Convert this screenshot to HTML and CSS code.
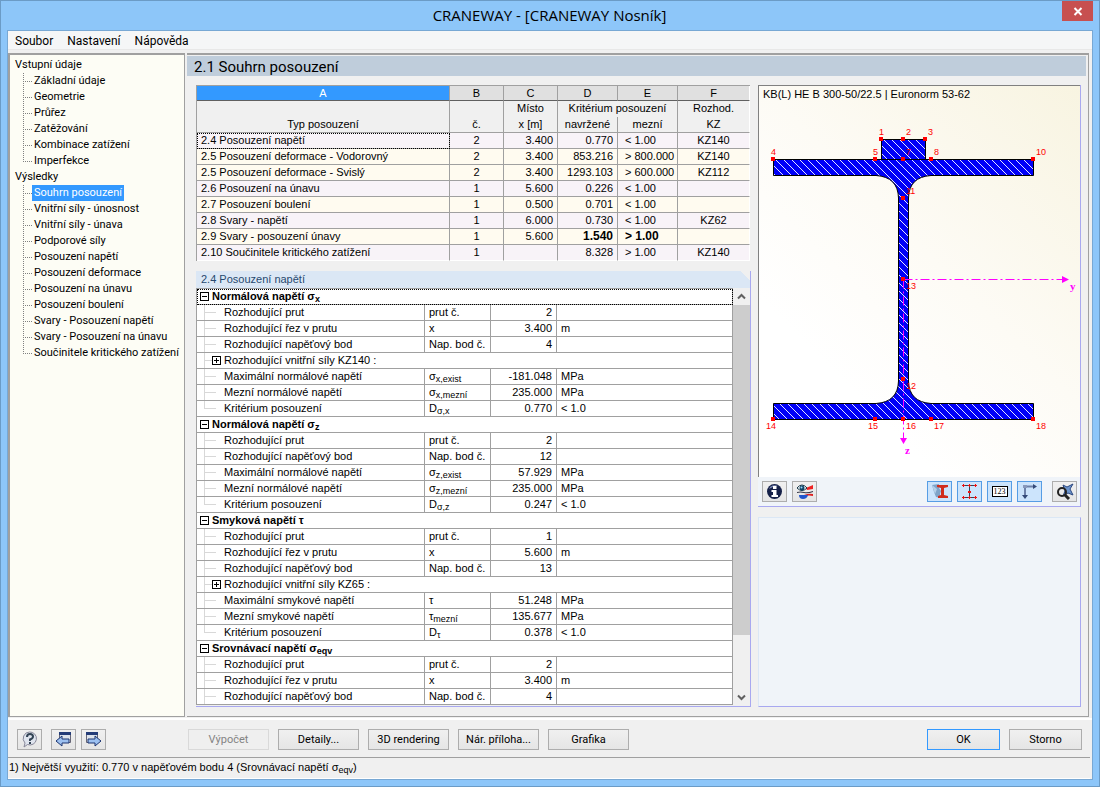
FILE: index.html
```html
<!DOCTYPE html>
<html lang="cs">
<head>
<meta charset="UTF-8">
<meta name="viewport" content="width=device-width, initial-scale=1.0">
<title>CRANEWAY - [CRANEWAY Nosník]</title>
<link rel="stylesheet" href="styles.css">
</head>
<body>
<div class="window">
  <header class="titlebar">
    <h1>CRANEWAY - [CRANEWAY Nosník]</h1>
    <button class="close" aria-label="Zavřít">
      <svg width="10" height="9" viewBox="0 0 10 9"><path d="M1.5 1l7 7M8.5 1l-7 7" stroke="#fff" stroke-width="2"/></svg>
    </button>
  </header>

  <div class="client">
    <nav class="menu">
      <button>Soubor</button>
      <button>Nastavení</button>
      <button>Nápověda</button>
    </nav>

    <div class="body">
      <nav class="tree">
        <p>Vstupní údaje</p>
        <ul>
          <li><a href="#">Základní údaje</a></li>
          <li><a href="#">Geometrie</a></li>
          <li><a href="#">Průřez</a></li>
          <li><a href="#">Zatěžování</a></li>
          <li><a href="#">Kombinace zatížení</a></li>
          <li><a href="#">Imperfekce</a></li>
        </ul>
        <p>Výsledky</p>
        <ul>
          <li><a href="#" class="selected">Souhrn posouzení</a></li>
          <li><a href="#">Vnitřní síly - únosnost</a></li>
          <li><a href="#">Vnitřní síly - únava</a></li>
          <li><a href="#">Podporové síly</a></li>
          <li><a href="#">Posouzení napětí</a></li>
          <li><a href="#">Posouzení deformace</a></li>
          <li><a href="#">Posouzení na únavu</a></li>
          <li><a href="#">Posouzení boulení</a></li>
          <li><a href="#">Svary - Posouzení napětí</a></li>
          <li><a href="#">Svary - Posouzení na únavu</a></li>
          <li><a href="#">Součinitele kritického zatížení</a></li>
        </ul>
      </nav>

      <main class="main">
        <h2>2.1 Souhrn posouzení</h2>
        <div class="columns">
          <div class="left">
            <table class="summary">
              <colgroup>
                <col><col class="c-no"><col class="c-no"><col class="c-val"><col class="c-val"><col class="c-kz">
              </colgroup>
              <thead>
                <tr class="letters"><th class="active">A</th><th>B</th><th>C</th><th>D</th><th>E</th><th>F</th></tr>
                <tr class="names"><th></th><th></th><th>Místo</th><th colspan="2">Kritérium posouzení</th><th>Rozhod.</th></tr>
                <tr class="names last"><th>Typ posouzení</th><th>č.</th><th>x [m]</th><th>navržené</th><th>mezní</th><th>KZ</th></tr>
              </thead>
              <tbody>
                <tr><td class="focus">2.4 Posouzení napětí</td><td>2</td><td>3.400</td><td>0.770</td><td>&lt; 1.00</td><td>KZ140</td></tr>
                <tr class="warm"><td>2.5 Posouzení deformace - Vodorovný</td><td>2</td><td>3.400</td><td>853.216</td><td>&gt; 800.000</td><td>KZ140</td></tr>
                <tr class="warm"><td>2.5 Posouzení deformace - Svislý</td><td>2</td><td>3.400</td><td>1293.103</td><td>&gt; 600.000</td><td>KZ112</td></tr>
                <tr><td>2.6 Posouzení na únavu</td><td>1</td><td>5.600</td><td>0.226</td><td>&lt; 1.00</td><td></td></tr>
                <tr class="warm"><td>2.7 Posouzení boulení</td><td>1</td><td>0.500</td><td>0.701</td><td>&lt; 1.00</td><td></td></tr>
                <tr><td>2.8 Svary - napětí</td><td>1</td><td>6.000</td><td>0.730</td><td>&lt; 1.00</td><td>KZ62</td></tr>
                <tr class="warm"><td>2.9 Svary - posouzení únavy</td><td>1</td><td>5.600</td><td class="over">1.540</td><td class="over">&gt; 1.00</td><td></td></tr>
                <tr><td>2.10 Součinitele kritického zatížení</td><td>1</td><td></td><td>8.328</td><td>&gt; 1.00</td><td>KZ140</td></tr>
              </tbody>
            </table>

            <section class="details">
              <h3>2.4 Posouzení napětí</h3>
              <div class="scroller">
                <table class="grid">
                  <colgroup><col class="g-name"><col class="g-sym"><col class="g-val"><col></colgroup>
                  <tbody>
                    <tr class="group focus"><th colspan="4"><i class="box"></i>Normálová napětí σ<sub>x</sub></th></tr>
                    <tr><td>Rozhodující prut</td><td>prut č.</td><td>2</td><td></td></tr>
                    <tr><td>Rozhodující řez v prutu</td><td>x</td><td>3.400</td><td>m</td></tr>
                    <tr><td>Rozhodující napěťový bod</td><td>Nap. bod č.</td><td>4</td><td></td></tr>
                    <tr class="sub"><td colspan="4"><i class="box plus"></i>Rozhodující vnitřní síly KZ140 :</td></tr>
                    <tr><td>Maximální normálové napětí</td><td>σ<sub>x,exist</sub></td><td>-181.048</td><td>MPa</td></tr>
                    <tr><td>Mezní normálové napětí</td><td>σ<sub>x,mezní</sub></td><td>235.000</td><td>MPa</td></tr>
                    <tr class="end"><td>Kritérium posouzení</td><td>D<sub>σ,x</sub></td><td>0.770</td><td>&lt; 1.0</td></tr>

                    <tr class="group"><th colspan="4"><i class="box"></i>Normálová napětí σ<sub>z</sub></th></tr>
                    <tr><td>Rozhodující prut</td><td>prut č.</td><td>2</td><td></td></tr>
                    <tr><td>Rozhodující napěťový bod</td><td>Nap. bod č.</td><td>12</td><td></td></tr>
                    <tr><td>Maximální normálové napětí</td><td>σ<sub>z,exist</sub></td><td>57.929</td><td>MPa</td></tr>
                    <tr><td>Mezní normálové napětí</td><td>σ<sub>z,mezní</sub></td><td>235.000</td><td>MPa</td></tr>
                    <tr class="end"><td>Kritérium posouzení</td><td>D<sub>σ,z</sub></td><td>0.247</td><td>&lt; 1.0</td></tr>

                    <tr class="group"><th colspan="4"><i class="box"></i>Smyková napětí τ</th></tr>
                    <tr><td>Rozhodující prut</td><td>prut č.</td><td>1</td><td></td></tr>
                    <tr><td>Rozhodující řez v prutu</td><td>x</td><td>5.600</td><td>m</td></tr>
                    <tr><td>Rozhodující napěťový bod</td><td>Nap. bod č.</td><td>13</td><td></td></tr>
                    <tr class="sub"><td colspan="4"><i class="box plus"></i>Rozhodující vnitřní síly KZ65 :</td></tr>
                    <tr><td>Maximální smykové napětí</td><td>τ</td><td>51.248</td><td>MPa</td></tr>
                    <tr><td>Mezní smykové napětí</td><td>τ<sub>mezní</sub></td><td>135.677</td><td>MPa</td></tr>
                    <tr class="end"><td>Kritérium posouzení</td><td>D<sub>τ</sub></td><td>0.378</td><td>&lt; 1.0</td></tr>

                    <tr class="group"><th colspan="4"><i class="box"></i>Srovnávací napětí σ<sub>eqv</sub></th></tr>
                    <tr><td>Rozhodující prut</td><td>prut č.</td><td>2</td><td></td></tr>
                    <tr><td>Rozhodující řez v prutu</td><td>x</td><td>3.400</td><td>m</td></tr>
                    <tr><td>Rozhodující napěťový bod</td><td>Nap. bod č.</td><td>4</td><td></td></tr>
                  </tbody>
                </table>
                <div class="scrollbar">
                  <button aria-label="Nahoru"><svg width="9" height="7" viewBox="0 0 9 7"><path d="M1 5.500L4.500 2L8 5.500" fill="none" stroke="#606060" stroke-width="2"/></svg></button>
                  <div class="thumb"></div>
                  <button aria-label="Dolů"><svg width="9" height="7" viewBox="0 0 9 7"><path d="M1 1.500L4.500 5L8 1.500" fill="none" stroke="#606060" stroke-width="2"/></svg></button>
                </div>
              </div>
            </section>
          </div>

          <div class="right">
            <section class="view">
              <div class="canvas">
                <p>KB(L) HE B 300-50/22.5 | Euronorm 53-62</p>
                <svg class="profile" viewBox="759 104 321 373">
                  <defs>
                    <pattern id="hatch" width="8" height="8" patternUnits="userSpaceOnUse">
                      <rect width="8" height="8" fill="#0000f8"/>
                      <path d="M-1 -1l10 10M-1 7l2 2M7 -1l2 2" stroke="#e4e4ff" stroke-width="1"/>
                    </pattern>
                  </defs>
                  <g fill="url(#hatch)" stroke="#000">
                    <path d="M773.500 159.500H1033.500V175.500H931Q909 177 908.500 198V381Q909 402 931 403.500H1033.500V419.500H773.500V403.500H876Q898 402 898.500 381V198Q898 177 876 175.500H773.500Z"/>
                    <path d="M881.500 139.500H925.500V159.500H881.500Z"/>
                  </g>
                  <g stroke="#f0f" fill="none" stroke-dasharray="9 3 2 3">
                    <path d="M903.500 279.500H1062"/>
                    <path d="M903.500 279.500V438"/>
                  </g>
                  <path d="M1062 276l7 3.500l-7 3.500zM900 438h7l-3.500 6z" fill="#f0f"/>
                  <g class="axis"><text x="1070" y="290">y</text><text x="905" y="454">z</text></g>
                  <path fill="red" d="M879 137h4v4h-4zM901 137h4v4h-4zM923 137h4v4h-4zM771 157h4v4h-4zM873 157h4v4h-4zM901 157h4v4h-4zM929 157h4v4h-4zM1031 157h4v4h-4zM901 196h4v4h-4zM901 277h4v4h-4zM901 377h4v4h-4zM771 417h4v4h-4zM873 417h4v4h-4zM901 417h4v4h-4zM929 417h4v4h-4zM1031 417h4v4h-4z"/>
                  <g class="points">
                    <text x="879" y="135">1</text><text x="906" y="135">2</text><text x="928" y="135">3</text>
                    <text x="771" y="155">4</text><text x="873" y="155">5</text><text x="906" y="155">7</text>
                    <text x="934" y="155">8</text><text x="1036" y="155">10</text><text x="906" y="194">11</text>
                    <text x="906" y="289">13</text><text x="906" y="389">12</text><text x="766" y="429">14</text>
                    <text x="868" y="429">15</text><text x="906" y="429">16</text><text x="934" y="429">17</text>
                    <text x="1036" y="429">18</text>
                  </g>
                </svg>
              </div>
              <div class="tools">
                <button class="icon" aria-label="Informace">
                  <svg width="17" height="17" viewBox="0 0 17 17"><circle cx="8.500" cy="8.500" r="7.500" fill="#152048"/><path d="M3 6a6 5 0 0 1 9-3q-5 0-9 3z" fill="#7d8bb8"/><path d="M7 3h3.500v3H7zM5.500 7h5v5H12v2H5.500v-2H7V9H5.500z" fill="#fff"/></svg>
                </button>
                <button class="icon" aria-label="Výsledky">
                  <svg width="18" height="17" viewBox="0 0 18 17"><path d="M10 5l7-3v4l-6 1z" fill="#e22"/><path d="M1 9q4-1 7 0t9-1v1q-5 2-9 1t-7 0z" fill="#334"/><path d="M8 12q5-2 9-1v2q-4-1-8 0z" fill="#d22"/><path d="M3 12h9q-1 4-5 4t-4-4z" fill="#25c"/><path d="M1 5q5-6 10 0q-5 5-10 0z" fill="#fff" stroke="#134"/><circle cx="6" cy="5" r="2.500" fill="#146"/><circle cx="5.500" cy="4.500" r="1" fill="#9df"/></svg>
                </button>
                <span class="spacer"></span>
                <button class="icon on" aria-label="Průřez">
                  <svg width="18" height="17" viewBox="0 0 18 17"><path d="M1 2l7-1v4l2 3-1 3 1 4-5-1-2-5z" fill="#7ea3c8"/><path d="M1 2l5 4-2 5z" fill="#b4cfe8"/><path d="M6 2h11v2l-4 1v7l4 1v2H7v-2l3-1V5L6 4z" fill="#d02c1c"/></svg>
                </button>
                <button class="icon on" aria-label="Napěťové body">
                  <svg width="17" height="17" viewBox="0 0 17 17"><path d="M2 2.500h13M2 14.500h13M8.500 2v13" stroke="#345"/><path d="M1 2h3v1H1zM2 1h1v3H2zM7 2h3v1H7zM8 1h1v3H8zM13 2h3v1h-3zM14 1h1v3h-1zM7 8h3v2H7zM1 14h3v1H1zM2 13h1v3H2zM7 14h3v1H7zM8 13h1v3H8zM13 14h3v1h-3zM14 13h1v3h-1z" fill="#e11"/></svg>
                </button>
                <button class="icon on" aria-label="Číslování"><span class="num">123</span></button>
                <button class="icon on" aria-label="Osy">
                  <svg width="17" height="17" viewBox="0 0 17 17"><path d="M4 13V3.500h9" fill="none" stroke="#6c80a8" stroke-width="2"/><path d="M12 1l4 2.500-4 2.500zM1 12h6l-3 4z" fill="#344a78"/><path d="M2 2h4v3H2z" fill="#89b"/></svg>
                </button>
                <button class="icon last" aria-label="Celý pohled">
                  <svg width="18" height="17" viewBox="0 0 18 17"><path d="M7 2l4 2 6-3-3 5 3 6-5-2-5 3 2-5z" fill="#6c94cc" stroke="#2c4880" stroke-width="1"/><circle cx="6" cy="9" r="4" fill="none" stroke="#222" stroke-width="2"/><path d="M9 12l4 4" stroke="#222" stroke-width="3"/></svg>
                </button>
              </div>
            </section>
            <section class="empty"></section>
          </div>
        </div>
      </main>
    </div>

    <footer class="actions">
      <button class="icon" aria-label="Nápověda">
        <svg width="17" height="17" viewBox="0 0 17 17"><path d="M8.500 1a6.500 6.500 0 1 1-2 12.500L3 16l1-4A6.500 6.500 0 0 1 8.500 1z" fill="#dfe4ee" stroke="#889"/><path d="M6 6q0-3 3-3t3 2.500q0 2-3 3v1.500" fill="none" stroke="#345" stroke-width="2"/><path d="M8 11h2v2H8z" fill="#345"/></svg>
      </button>
      <button class="icon prev" aria-label="Předchozí">
        <svg width="17" height="17" viewBox="0 0 17 17"><path d="M4.500 1.500h11v10h-11z" fill="#dde3ec" stroke="#667"/><path d="M4 1h12v3H4z" fill="#243c78"/><path d="M1 10l6-5v3h7v4H7v3z" fill="#9cc0f0" stroke="#1c3470"/></svg>
      </button>
      <button class="icon" aria-label="Další">
        <svg width="17" height="17" viewBox="0 0 17 17"><path d="M1.500 1.500h11v10h-11z" fill="#dde3ec" stroke="#667"/><path d="M1 1h12v3H1z" fill="#243c78"/><path d="M16 10l-6-5v3H3v4h7v3z" fill="#9cc0f0" stroke="#1c3470"/></svg>
      </button>
      <div class="group-mid">
        <button class="btn" disabled>Výpočet</button>
        <button class="btn">Detaily...</button>
        <button class="btn">3D rendering</button>
        <button class="btn">Nár. příloha...</button>
        <button class="btn">Grafika</button>
      </div>
      <button class="btn small ok">OK</button>
      <button class="btn small">Storno</button>
    </footer>

    <div class="status">1) Největší využití: 0.770 v napěťovém bodu 4 (Srovnávací napětí σ<sub>eqv</sub>)</div>
  </div>
</div>
</body>
</html>
```
FILE: styles.css
```css
* {
  box-sizing: border-box;
}

body {
  margin: 0;
  font: 11px/15px Roboto, "Liberation Sans", sans-serif;
  color: #000;
}

h1, h2, h3, p, ul {
  margin: 0;
  padding: 0;
  font-weight: normal;
}

button {
  font: inherit;
  color: inherit;
  padding: 0;
}

svg {
  display: block;
}

sub {
  font-size: 9px;
  line-height: 0;
  vertical-align: -2px;
}

/* window frame */
.window {
  display: flex;
  flex-direction: column;
  height: 100vh;
  padding: 0 6px 6px;
  border: 1px solid #6b9bc6;
  background: #8dc6f9;
}

.titlebar {
  display: flex;
  height: 29px;
}

.titlebar h1 {
  flex: 1;
  padding-left: 30px;
  font: 15px/29px "Open Sans", sans-serif;
  text-align: center;
}

.close {
  display: flex;
  align-items: center;
  justify-content: center;
  width: 31px;
  height: 20px;
  border: 0;
  background: #c75050;
}

.client {
  flex: 1;
  display: flex;
  flex-direction: column;
  min-height: 0;
  border: 1px solid #78a8d4;
  background: #f0f0f0;
}

.menu {
  display: flex;
  gap: 14px;
  height: 19px;
  padding-left: 7px;
  border-bottom: 1px solid #e8e8e8;
  background: #f5f6f7;
}

.menu button {
  border: 0;
  background: none;
  font-size: 12px;
  line-height: 20px;
}

.body {
  flex: 1;
  display: flex;
  gap: 2px;
  min-height: 0;
  padding: 3px 3px 1px 0;
}

/* navigation tree */
.tree {
  width: 177px;
  padding: 2px 0 0 5px;
  border: 1px solid #a0a0a0;
  border-width: 2px 1px 1px 2px;
  background: #fdfdf5;
  line-height: 16px;
  white-space: nowrap;
}

.tree ul {
  list-style: none;
}

.tree li {
  height: 16px;
  padding-left: 17px;
  background:
    repeating-linear-gradient(to bottom, #808080 0 1px, transparent 1px 2px) 8px 0 / 1px 100% no-repeat,
    repeating-linear-gradient(to right, #808080 0 1px, transparent 1px 2px) 8px 8px / 9px 1px no-repeat;
}

.tree li:last-child {
  background-size: 1px 8px, 9px 1px;
}

.tree a {
  display: inline-block;
  padding: 0 2px;
  color: #000;
  text-decoration: none;
}

.tree .selected {
  background: #3399ff;
  color: #fff;
}

/* results */
.main {
  flex: 1;
  display: flex;
  flex-direction: column;
  min-width: 0;
  border: 1px solid #a0a0a0;
  border-width: 2px 1px 1px 0;
}

.main h2 {
  height: 20px;
  margin: 1px 2px 0 0;
  padding-left: 7px;
  background: #bfcddb;
  font-size: 15px;
  line-height: 22px;
}

.columns {
  flex: 1;
  display: grid;
  grid-template-columns: 1fr 323px;
  gap: 7px;
  min-height: 0;
  padding: 9px 7px 9px 9px;
}

.left, .right {
  display: flex;
  flex-direction: column;
  gap: 10px;
  min-width: 0;
  min-height: 0;
}

table {
  width: 100%;
  table-layout: fixed;
  border-collapse: separate;
  border-spacing: 0;
  font-family: "Liberation Sans", Arial, sans-serif;
}

td, th {
  height: 16px;
  padding: 0;
  border: 0 solid #a0a0a0;
  border-width: 0 1px 1px 0;
  line-height: 15px;
  white-space: nowrap;
}

.summary {
  width: calc(100% - 1px);
  border: 1px solid #a0a0a0;
  border-width: 1px 0 0 1px;
}

.c-no { width: 54px; }
.c-val { width: 60px; }
.c-kz { width: 72px; }

.summary th {
  font-weight: normal;
}

.summary .letters th {
  height: 15px;
  border-bottom-color: #606060;
  background: #e0e0e0;
  line-height: 13px;
}

.summary .letters .active {
  background: #3399ff;
  color: #fff;
}

.summary .names th {
  border-bottom: 0;
  line-height: 14px;
  vertical-align: top;
}

.summary .names.last th {
  border-bottom: 1px solid #a0a0a0;
}

.summary td {
  background: #f8f3f8;
  text-align: center;
}

.summary .warm td {
  background: #fffbf0;
}

.summary td:first-child {
  padding-left: 4px;
  text-align: left;
}

.summary td:nth-child(3),
.summary td:nth-child(4) {
  padding-right: 4px;
  text-align: right;
}

.summary td:nth-child(5) {
  padding-left: 7px;
  text-align: left;
}

.summary tr > :last-child {
  border-right-color: #fff;
}

.summary tbody tr:last-child td {
  border-bottom-color: #fff;
}

.summary .over {
  font-size: 12px;
  font-weight: bold;
}

.focus {
  outline: 1px dotted #000;
  outline-offset: -1px;
}

.details {
  flex: 1;
  display: flex;
  flex-direction: column;
  min-height: 0;
  border: 1px solid #a8a8f0;
  border-width: 0 1px 1px 0;
}

.details h3 {
  height: 17px;
  padding-left: 5px;
  background: linear-gradient(225deg, #f0f0f0 7px, #dbe7f5 7px);
  color: #27496f;
  font: 11px/17px "Liberation Sans", Arial, sans-serif;
}

.scroller {
  flex: 1;
  display: flex;
  min-height: 0;
  overflow: hidden;
}

.grid {
  flex: 1;
  align-self: flex-start;
  border: 1px solid #a0a0a0;
  border-width: 1px 0 0 1px;
  background: #fff;
}

.g-name { width: 228px; }
.g-sym, .g-val { width: 66px; }

.grid td {
  padding-left: 4px;
}

.grid td:first-child {
  padding-left: 27px;
  background:
    linear-gradient(#d8d8d8, #d8d8d8) 7px 0 / 1px 100% no-repeat,
    linear-gradient(#d8d8d8, #d8d8d8) 7px 7px / 12px 1px no-repeat;
}

.grid .end td:first-child {
  background-size: 1px 7px, 12px 1px;
}

.grid .sub td:first-child {
  padding-left: 15px;
  background-size: 1px 100%, 8px 1px;
}

.grid td:nth-child(3) {
  padding-right: 4px;
  text-align: right;
}

.grid th {
  padding-left: 3px;
  text-align: left;
}

.box {
  display: inline-block;
  width: 9px;
  height: 9px;
  margin-right: 3px;
  border: 1px solid #000;
  background: linear-gradient(#000, #000) center / 5px 1px no-repeat #fff;
  vertical-align: -1px;
}

.box.plus {
  background:
    linear-gradient(#000, #000) center / 5px 1px no-repeat,
    linear-gradient(#000, #000) center / 1px 5px no-repeat #fff;
}

.scrollbar {
  display: flex;
  flex-direction: column;
  width: 17px;
  background: #f0f0f0;
}

.scrollbar button {
  display: flex;
  align-items: center;
  justify-content: center;
  height: 17px;
  border: 0;
  background: none;
}

.scrollbar .thumb {
  height: 79%;
  margin-bottom: auto;
  background: #cdcdcd;
}

/* cross-section view */
.view {
  display: flex;
  flex-direction: column;
  border: 1px solid #a8a8f0;
  border-width: 0 1px 1px 0;
  background: #f0f4f9;
}

.canvas {
  border: 1px solid #808080;
  border-width: 1px 0 0 1px;
  background: linear-gradient(45deg, #fff 25%, #fdfbf5 55%, #f8f4e1);
}

.canvas p {
  height: 18px;
  padding-left: 4px;
  font: 11px/17px "Liberation Sans", Arial, sans-serif;
}

.profile {
  width: 100%;
}

.points {
  fill: red;
  font: 9px "Liberation Sans", Arial, sans-serif;
}

.axis {
  fill: #f0f;
  font: bold 11px "Liberation Serif", serif;
}

.tools {
  display: flex;
  gap: 5px;
  padding: 4px 3px 4px 4px;
}

.spacer {
  flex: 1;
}

.icon {
  display: flex;
  align-items: center;
  justify-content: center;
  width: 25px;
  height: 21px;
  border: 1px solid #adadad;
  background: linear-gradient(#f0f0f0, #e5e5e5);
}

.icon.on {
  border-color: #569de5;
  background: #cce4fc;
}

.icon.last {
  margin-left: 5px;
}

.num {
  padding: 0 1px;
  border: 1px solid #000;
  background: #fff;
  font: 8px/9px "Liberation Serif", serif;
}

.empty {
  flex: 1;
  border: 1px solid #a8a8f0;
  border-color: #dbe7f5 #a8a8f0 #a8a8f0 #dbe7f5;
  background: #f0f4f9;
}

/* bottom buttons */
.actions {
  display: flex;
  gap: 5px;
  padding: 9px 10px 7px 9px;
  border-top: 2px solid #fff;
}

.prev {
  margin-left: 4px;
}

.group-mid {
  flex: 1;
  display: flex;
  gap: 9px;
  padding-left: 77px;
}

.btn {
  width: 81px;
  height: 21px;
  border: 1px solid #adadad;
  background: linear-gradient(#f0f0f0, #e5e5e5);
}

.btn:disabled {
  border-color: #d9d9d9;
  background: #efefef;
  color: #838383;
}

.btn.small {
  width: 73px;
}

.btn.ok {
  margin-right: 4px;
  border-color: #3399ff;
}

.status {
  height: 22px;
  margin-right: 2px;
  padding-left: 1px;
  border-top: 1px solid #a0a0a0;
  border-bottom: 1px solid #fff;
  font: 11px/19px "Liberation Sans", Arial, sans-serif;
}
```
